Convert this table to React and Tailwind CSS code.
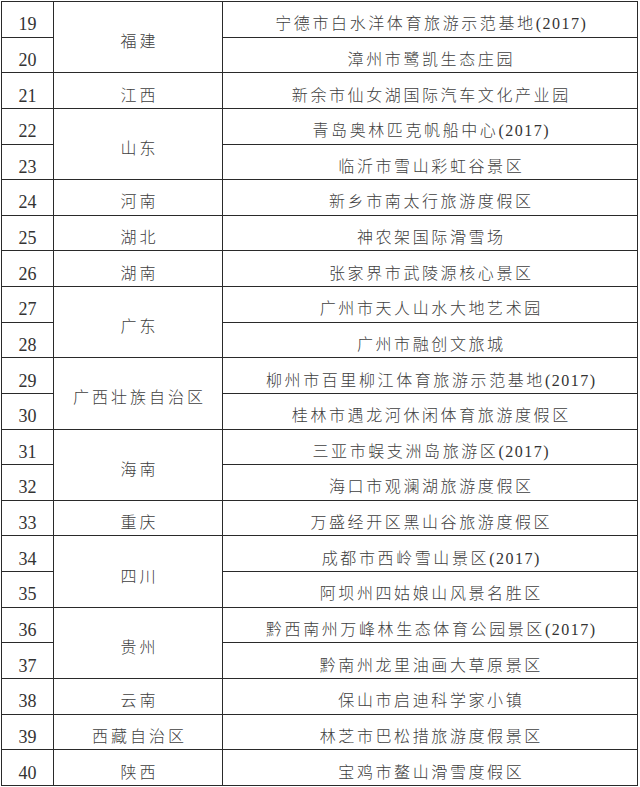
const rows = [
  { no: 19, prov: '福建', span: 2, name: '宁德市白水洋体育旅游示范基地', year: true },
  { no: 20, name: '漳州市鹭凯生态庄园' },
  { no: 21, prov: '江西', span: 1, name: '新余市仙女湖国际汽车文化产业园' },
  { no: 22, prov: '山东', span: 2, name: '青岛奥林匹克帆船中心', year: true },
  { no: 23, name: '临沂市雪山彩虹谷景区' },
  { no: 24, prov: '河南', span: 1, name: '新乡市南太行旅游度假区' },
  { no: 25, prov: '湖北', span: 1, name: '神农架国际滑雪场' },
  { no: 26, prov: '湖南', span: 1, name: '张家界市武陵源核心景区' },
  { no: 27, prov: '广东', span: 2, name: '广州市天人山水大地艺术园' },
  { no: 28, name: '广州市融创文旅城' },
  { no: 29, prov: '广西壮族自治区', span: 2, name: '柳州市百里柳江体育旅游示范基地', year: true },
  { no: 30, name: '桂林市遇龙河休闲体育旅游度假区' },
  { no: 31, prov: '海南', span: 2, name: '三亚市蜈支洲岛旅游区', year: true },
  { no: 32, name: '海口市观澜湖旅游度假区' },
  { no: 33, prov: '重庆', span: 1, name: '万盛经开区黑山谷旅游度假区' },
  { no: 34, prov: '四川', span: 2, name: '成都市西岭雪山景区', year: true },
  { no: 35, name: '阿坝州四姑娘山风景名胜区' },
  { no: 36, prov: '贵州', span: 2, name: '黔西南州万峰林生态体育公园景区', year: true },
  { no: 37, name: '黔南州龙里油画大草原景区' },
  { no: 38, prov: '云南', span: 1, name: '保山市启迪科学家小镇' },
  { no: 39, prov: '西藏自治区', span: 1, name: '林芝市巴松措旅游度假景区' },
  { no: 40, prov: '陕西', span: 1, name: '宝鸡市鳌山滑雪度假区' },
];

const cell = 'border border-[#2a2a2a] text-center align-middle p-0 pt-[10px] leading-none';
const cjk = '"Liberation Serif", "Noto Sans CJK SC", serif';

export default function App() {
  return (
    <div className="w-[640px] h-[787px] bg-white pt-px pl-px text-[#404040]" style={{ fontFamily: cjk }}>
      <table className="border-collapse table-fixed w-[636px] h-[785px]">
        <colgroup>
          <col className="w-[52px]" />
          <col className="w-[169px]" />
          <col className="w-[415px]" />
        </colgroup>
        <tbody>
          {rows.map((r) => (
            <tr key={r.no} className="h-[35.64px]">
              <td className={`${cell} text-[18px] text-[#333]`}>{r.no}</td>
              {r.prov && (
                <td rowSpan={r.span} className={`${cell} text-[16px] font-light tracking-[3px]`}>
                  <span className="pl-[3px]">{r.prov}</span>
                </td>
              )}
              <td className={`${cell} text-[16px] font-light tracking-[2.6px]`}>
                <span className="pl-[2.6px]">{r.name}</span>
                {r.year && <span className="tracking-[1.5px] text-[16px] text-[#333]">(2017)</span>}
              </td>
            </tr>
          ))}
        </tbody>
      </table>
    </div>
  );
}
